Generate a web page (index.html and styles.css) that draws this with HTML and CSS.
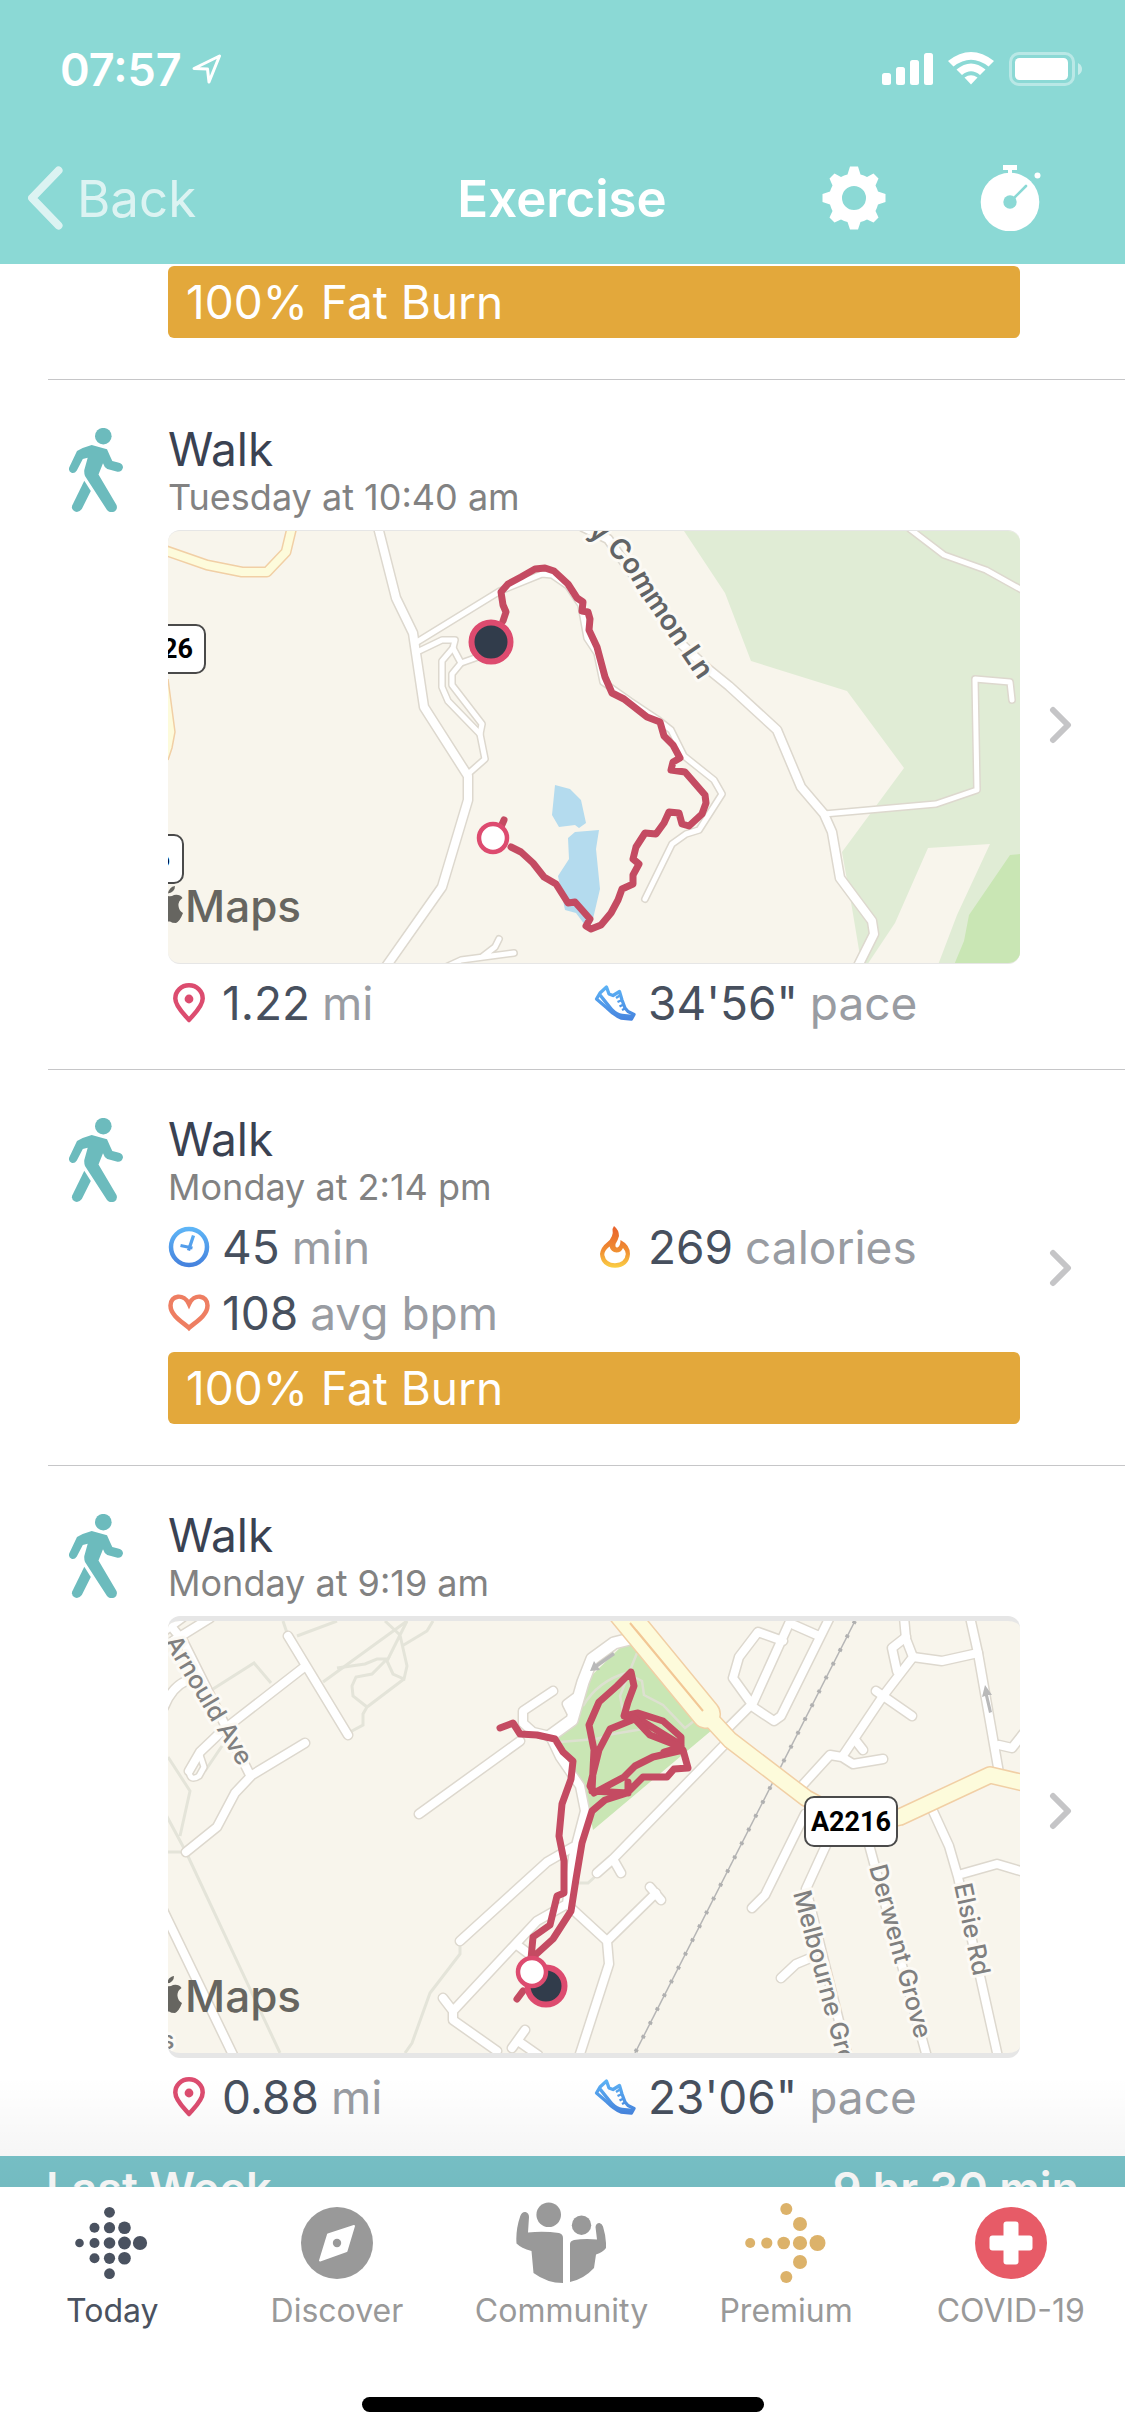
FILE: index.html
```html
<!DOCTYPE html>
<html lang="en">
<head>
    <meta charset="UTF-8">
    <meta name="viewport" content="width=device-width, initial-scale=1.0">
    <title>Exercise</title>
    <link rel="stylesheet" href="styles.css">
</head>
<body>
    <!-- shared icons and road networks -->
    <svg class="defs" width="0" height="0" aria-hidden="true">
        <defs>
            <linearGradient id="blue" x1="0" y1="0" x2="0" y2="42" gradientUnits="userSpaceOnUse">
                <stop offset="0" stop-color="#5fb8f8"/>
                <stop offset="1" stop-color="#447fdc"/>
            </linearGradient>
            <linearGradient id="fire" x1="0" y1="0" x2="0" y2="42" gradientUnits="userSpaceOnUse">
                <stop offset="0" stop-color="#e8602c"/>
                <stop offset=".6" stop-color="#f08f33"/>
                <stop offset="1" stop-color="#fbd145"/>
            </linearGradient>
            <g id="roads-a">
                <path class="lane" d="M249 111 L332 60 L374 43 L384 44 L400 55 L413 74 L419 107 L429 122 L435 151 L462 170 L489 188 L503 199 L516 225 L546 249 L554 263 L531 299 L518 303 L504 313 L477 368"/>
                <path class="lane" d="M249 121 L274 109 H287 L285 117 L293 132 L310 126"/>
                <path class="lane" d="M285 117 L274 130 V156 L280 170 L312 203"/>
                <path class="lane" d="M293 132 L284 143 V154 L314 193 L312 203 L317 228 L300 243"/>
                <path class="lane" d="M278 436 L293 429 L346 422 M314 426 L327 416 L331 408"/>
                <path class="lane" d="M742 -2 L776 24 L818 39 L854 59"/>
                <path class="lane" d="M656 283 L768 273 L809 259 L807 148 L842 151 L844 169"/>
                <path class="road" d="M210 -4 L228 67 L245 102 L256 176 L300 245 V269 L274 356 L217 437"/>
                <path class="road" d="M415 -4 L440 8 L476 59 L509 109 L540 138 L561 155 L609 199 L633 256 L656 283 L664 301 L672 347 L704 390 L706 403 L689 437"/>
            </g>
            <g id="roads-b">
                <path class="road" d="M-4 10 L15 -4 M5 20 L42 -3 M-4 86 Q4 66 18 60 M-6 -6 L15 20 L82 154"/>
                <path class="road" d="M21 150 L32 131 L54 110 L135 47 M120 15 L180 114 M18 231 L49 206 L67 172 L84 154 L137 122"/>
                <path class="lane" d="M21 150 Q22 161 31 155 L36 146 L32 134"/>
                <path class="road" d="M-6 287 L66 436"/>
                <path class="road" d="M251 193 L352 120 M385 70 L355 90 V102 L365 111 L382 115"/>
                <path class="street-wide" d="M382 115 L404 99 L415 61 L424 38 L446 22 L462 18"/>
                <path class="road" d="M404 93 L399 83 L407 77"/>
                <path class="road" d="M382 115 L392 136 L412 165 L417 190 L405 236 L399 283 L369 300 L285 390 V399 L329 430 M275 377 L285 390 M349 324 L365 336"/>
                <path class="road" d="M405 226 L379 241 L292 320"/>
                <path class="road" d="M402 286 L439 320 L488 272 M482 266 L493 279 M439 320 L441 343 L411 436"/>
                <path class="road" d="M357 409 L344 427 M350 420 L370 434"/>
                <path class="road" d="M429 252 L445 238 L562 118 M445 238 L453 252"/>
                <path class="road" d="M558 109 L585 82 L624 -4 M583 82 L565 57 L571 36 L590 11 L615 20 M585 86 L606 100 L613 95 L662 -4 M626 4 L651 15"/>
                <path class="road" d="M736 -4 L738 18 L745 36 L715 75 L674 136 L685 143 L715 138 M674 136 L662 134 L631 168"/>
                <path class="road" d="M738 16 L724 27 L729 50 M745 36 L774 40 L810 32 M708 70 L744 95 M688 120 L695 129"/>
                <path class="road" d="M802 -4 L810 32 L831 152 M831 124 L844 127 L855 113"/>
                <path class="road" d="M637 193 L597 274 L584 287 M660 220 L638 268 L680 436 M700 220 L759 436"/>
                <path class="road" d="M764 188 L781 225 L790 256 L830 436 M790 254 L829 243 L856 251 M613 357 L628 343 L640 338"/>
            </g>
        </defs>
        <symbol id="walker" viewBox="0 0 54 84">
            <circle cx="34.3" cy="8.2" r="8.3"/>
            <path d="M8 23 Q15 19 22.7 17 L38 21.2 Q41 28 43.3 33 L50 34.7 Q54 36 54 39.5 Q53 44 48.5 43.7 L38.3 41 Q35 39 34 35.3 L29.5 46.5 L47.5 77 Q49 81 45.5 83.5 Q41 85.5 38 82 L16 48 Q15 45 15.3 42 L18.7 29.8 L13.8 31 L7.8 42.5 Q5.5 46 2.5 44.8 Q-0.8 43.5 0.2 39.5 Z"/>
            <path d="M15.3 52.7 L21.8 63 L12.8 81 Q10 84.8 6 83.6 Q2 81.5 3.2 77.5 Z"/>
        </symbol>
        <symbol id="pin" viewBox="0 0 42 42">
            <path d="M21 38 C18 34 7.3 25 7.3 16.5 A13.7 13.2 0 0 1 34.7 16.5 C34.7 25 24 34 21 38 Z" fill="none" stroke="#dc4c6f" stroke-width="4.5" stroke-linejoin="round"/>
            <circle cx="21" cy="17" r="4.4" fill="#dc4c6f"/>
        </symbol>
        <symbol id="shoe" viewBox="0 0 42 42">
            <g fill="none" stroke="url(#blue)" stroke-linejoin="round">
                <path d="M2.5 17 L6 11 L12.5 5 L15 12 L19 13.5 L25.5 9.5 L28 18 L31 26 L34 29.5 L40 32.5 L37.5 37 L27 36 Q20 33 13 26 Z" stroke-width="3.3"/>
                <path d="M6 13 L18 28 Q23 33 28 33.5 L38 34.5" stroke-width="3.5"/>
                <path d="M22 16 L26.5 13 M23.5 20 L28 18 M25.5 24.5 L29.5 22.5 M28 28 L31 26.5" stroke-width="2.4"/>
            </g>
        </symbol>
        <symbol id="next" viewBox="0 0 24 38">
            <path d="M4 4 L19 19 L4 34" fill="none" stroke="#c5c5c7" stroke-width="6" stroke-linecap="round" stroke-linejoin="round"/>
        </symbol>
        <symbol id="apple" viewBox="0 0 16 38">
            <path d="M0 10 Q3 11 6 9 Q12 8 14.5 12 Q10 15 10.5 20 Q11 25 15 27 Q12 35 8 37 Q4 37 2 35.5 L0 35.5 Z"/>
            <path d="M0 7.5 Q1 1 7 0 Q7 6 0 7.5 Z"/>
        </symbol>
    </svg>

    <header class="header">
        <div class="status">
            <span class="time">07:57</span>
            <svg class="location" viewBox="0 0 30 30"><path d="M2 14.5 L27.5 2 L17 28 L15.5 15 Z" fill="none" stroke="#fff" stroke-width="3" stroke-linejoin="round"/></svg>
            <svg class="signal" viewBox="0 0 202 36" fill="#fff">
                <rect x="1" y="22" width="9" height="12" rx="2.5"/>
                <rect x="15" y="16" width="9" height="18" rx="2.5"/>
                <rect x="29" y="9" width="9" height="25" rx="2.5"/>
                <rect x="43" y="2" width="9" height="32" rx="2.5"/>
                <path d="M67 10 Q90 -8 113 10 L107.5 15.5 Q90 2 72.5 15.5 Z"/>
                <path d="M75.5 18.5 Q90 6.5 104.5 18.5 L99 24 Q90 16.5 81 24 Z"/>
                <path d="M83.5 26.5 Q90 22 96.5 26.5 L90 33.5 Z"/>
                <rect x="129.5" y="2.5" width="63" height="31" rx="8.5" fill="none" stroke="#fff" stroke-width="3" opacity=".4"/>
                <rect x="134" y="7" width="53" height="22" rx="4.5"/>
                <path d="M197 12 Q201 14 201 18 Q201 22 197 24 Z" opacity=".5"/>
            </svg>
        </div>
        <nav class="navbar">
            <a class="back" href="#">
                <svg class="back-icon" viewBox="0 0 36 64"><path d="M31.5 4.5 L5 32 L31.5 59.5" fill="none" stroke="#fff" stroke-width="8" stroke-linecap="round" stroke-linejoin="round"/></svg>
                Back
            </a>
            <h1 class="title">Exercise</h1>
            <div class="actions">
                <button class="action" type="button" aria-label="Settings">
                    <svg viewBox="0 0 66 66">
                        <path fill="#fff" fill-rule="evenodd" d="M29 1.5 H37 L39.5 9.5 Q43 10.2 46 12 L52.5 8.5 L57.5 13.5 L54.5 20.5 Q56 23.5 57 26.5 L64.5 29 V37 L57 39.5 Q56 43 54.5 46 L57.5 52.5 L52.5 57.5 L46 54.5 Q43 56 39.5 57 L37 64.5 H29 L26.5 57 Q23 56 20 54.5 L13.5 57.5 L8.5 52.5 L11.5 46 Q10 43 9 39.5 L1.5 37 V29 L9 26.5 Q10 23.5 11.5 20.5 L8.5 13.5 L13.5 8.5 L20 12 Q23 10.2 26.5 9.5 Z M33 21 A12 12 0 1 0 33 45 A12 12 0 1 0 33 21 Z"/>
                    </svg>
                </button>
                <button class="action" type="button" aria-label="Start timer">
                    <svg viewBox="0 0 66 66">
                        <circle cx="33" cy="37" r="29.3" fill="#fff"/>
                        <path d="M26 0 H40 V5 H35 V10 H31 V5 H26 Z" fill="#fff"/>
                        <circle cx="60.5" cy="10.5" r="3" fill="#fff"/>
                        <circle cx="33" cy="37" r="6.7" fill="#8bd9d5"/>
                        <path d="M36 34 L49 21" stroke="#8bd9d5" stroke-width="2.6" stroke-linecap="round"/>
                    </svg>
                </button>
            </div>
        </nav>
    </header>

    <main class="feed">
        <article class="entry entry-cut">
            <div class="details">
                <div class="zone">100% Fat Burn</div>
            </div>
        </article>

        <article class="entry entry-map">
            <svg class="walker"><use href="#walker"/></svg>
            <div class="details">
                <h2 class="name">Walk</h2>
                <p class="date">Tuesday at 10:40 am</p>
                <div class="map map-thin">
                    <svg viewBox="0 0 852 432" preserveAspectRatio="xMidYMid slice">
                        <path class="park-light" d="M516 0 L557 62 L583 130 L679 160 L736 237 L674 321 L684 377 L691 419 L695 434 H852 V0 Z"/>
                        <path class="land" d="M760 317 L822 313 L789 384 L770 434 H699 L727 392 Z"/>
                        <path class="park" d="M852 323 L842 324 L801 384 L796 410 L786 434 H852 Z"/>
                        <path class="water" d="M387 254 L402 258 L413 269 L418 292 L411 297 L407 294 L391 296 L384 284 Z"/>
                        <path class="water" d="M407 301 L431 299 L428 318 L432 358 L424 392 L417 394 L408 382 L397 379 L390 345 L401 328 L400 307 Z"/>

                        <use href="#roads-a" class="road-edge"/>
                        <use href="#roads-a" class="road-fill"/>
                        <path class="main-edge w11" d="M-4 19 L39 34 L74 41 H99 L118 21 L124 -4"/>
                        <path class="main-fill w11" d="M-4 19 L39 34 L74 41 H99 L118 21 L124 -4"/>
                        <path d="M0 148 L7 201 L4 217 L0 229" fill="#fdfbdb" stroke="#f1cfa5" stroke-width="1.5"/>

                        <path id="common-ln" d="M419 3 Q451 24 470 60 L540 163" fill="none"/>
                        <text class="street street-bold"><textPath href="#common-ln">y Common Ln</textPath></text>

                        <rect class="shield" x="-60" y="94" width="97" height="48" rx="9"/>
                        <text class="shield-text" x="25" y="127" text-anchor="end">26</text>
                        <rect class="shield" x="-60" y="304" width="75" height="48" rx="9"/>
                        <text class="shield-text" x="2" y="337" text-anchor="end">6</text>

                        <path class="route" d="M335 90 L338 81 L335 74 L333 61 L340 53 L353 46 L367 38 L377 37 L386 40 L400 53 L409 67 L415 71 L414 80 L420 81 L422 88 L421 99 L429 116 L437 146 L444 162 L456 168 L479 186 L492 191 L496 205 L505 214 L512 227 L505 231 L503 239 L517 241 L524 249 L537 264 L538 272 L534 283 L521 295 L514 293 L511 282 L501 281 L496 292 L488 303 L477 302 L468 316 L465 328 L471 333 L465 344 L465 353 L454 358 L450 369 L443 382 L433 394 L423 398 L418 395 L422 388 L407 371 L400 372 L388 353 L376 346 L365 332 L353 321 L343 316"/>
                        <path class="route" d="M336 289 L332 298"/>
                        <circle cx="323" cy="111" r="19.500" fill="#313c4b" stroke="#dd4b6f" stroke-width="6"/>
                        <circle cx="325" cy="307" r="14" fill="#fff" stroke="#dd4b6f" stroke-width="4.500"/>

                        <use class="brand" href="#apple" x="0" y="355" width="16" height="38"/>
                        <text class="brand" x="17" y="391">Maps</text>
                    </svg>
                </div>
                <ul class="stats">
                    <li class="stat"><svg class="icon"><use href="#pin"/></svg><b>1.22</b> mi</li>
                    <li class="stat"><svg class="icon"><use href="#shoe"/></svg><b>34'56"</b> pace</li>
                </ul>
            </div>
            <a class="next" href="#" aria-label="Open Tuesday walk"><svg><use href="#next"/></svg></a>
        </article>

        <article class="entry">
            <svg class="walker"><use href="#walker"/></svg>
            <div class="details">
                <h2 class="name">Walk</h2>
                <p class="date">Monday at 2:14 pm</p>
                <ul class="stats">
                    <li class="stat">
                        <svg class="icon" viewBox="0 0 42 42" fill="none" stroke="url(#blue)"><circle cx="21" cy="21" r="18" stroke-width="4.5"/><path d="M25.5 9.5 L20.5 24.5 M12.5 19.5 L24.5 22" stroke-width="3.3"/></svg>
                        <b>45</b> min
                    </li>
                    <li class="stat">
                        <svg class="icon" viewBox="0 0 42 42"><path fill="url(#fire)" fill-rule="evenodd" d="M20 0 Q25 4 25 10 Q24 14 21.5 18 Q21 22 23.5 21.5 Q26.5 20 26.5 14 Q36 19 36 28 Q35 41 21 41.8 Q7 41 6 28 Q7 21 13 16.5 Q20 11 18.5 3 Z M15.5 20.5 Q10 25 10.3 29 Q12 37 21 37.3 Q31 36.5 31.8 28 Q31.5 24.5 29 22 Q27 26.5 22.5 26.5 Q17 26 15.5 20.5 Z"/></svg>
                        <b>269</b> calories
                    </li>
                    <li class="stat">
                        <svg class="icon" viewBox="0 0 42 42"><path d="M21 36 C16 31 2.5 24 2.5 13.5 C2.5 3 16 1 21 12 C26 1 39.5 3 39.5 13.5 C39.5 24 26 31 21 36 Z" fill="none" stroke="#ee7e62" stroke-width="4.5"/></svg>
                        <b>108</b> avg bpm
                    </li>
                </ul>
                <div class="zone">100% Fat Burn</div>
            </div>
            <a class="next" href="#" aria-label="Open Monday afternoon walk"><svg><use href="#next"/></svg></a>
        </article>

        <article class="entry entry-map entry-last">
            <svg class="walker"><use href="#walker"/></svg>
            <div class="details">
                <h2 class="name">Walk</h2>
                <p class="date">Monday at 9:19 am</p>
                <div class="map">
                    <svg viewBox="0 0 852 432" preserveAspectRatio="xMidYMid slice">
                        <path class="park" d="M459 20 L544 109 L425 209 L419 179 L412 161 L387 115 L407 97 L419 59 Z"/>
                        <path d="M392 121 L428 118 L445 113 L481 107 M469 32 L461 52 L452 75 L456 95 M415 85 Q430 60 458 52 L474 60 L476 74 L495 84 L517 107 L526 100" fill="none" stroke="#dde0d0" stroke-width="2.5"/>
                        <g class="footpath">
                            <path d="M0 136 L22 170 L12 215 M54 125 L37 150 M-4 190 L18 231 L112 432 M0 231 H18"/>
                            <path d="M45 68 L86 42 L103 62 M115 0 L120 15 M129 15 L169 0 M155 61 L239 0"/>
                            <path d="M217 0 L232 14 L219 40 L225 53 L236 58 L239 45 L232 14 M234 25 L259 10 L265 0 M239 0 L232 14"/>
                            <path d="M169 47 L197 43 L209 38 H219 L204 53 L188 56 L184 65 L185 75 L199 86 L236 58 M199 86 L195 93 V104 L182 111"/>
                            <path d="M292 322 V333 L262 372 L244 422 L237 432 M410 262 H420 L430 253"/>
                        </g>
                        <use href="#roads-b" class="road-edge"/>
                        <use href="#roads-b" class="road-fill"/>

                        <path d="M687 0 L467 432" stroke="#b5b5b5" stroke-width="1.5"/>
                        <path d="M687 0 L467 432" stroke="#b0b0b0" stroke-width="4" stroke-dasharray="3 12.5"/>

                        <g class="main-edge">
                            <path class="w30" d="M455 -8 L538 93"/>
                            <path class="w18" d="M538 93 L562 119 L638 177 L690 205 L732 196 L822 154 L856 162"/>
                        </g>
                        <g class="main-fill">
                            <path class="w30" d="M455 -8 L538 93"/>
                            <path class="w18" d="M538 93 L562 119 L638 177 L690 205 L732 196 L822 154 L856 162"/>
                        </g>
                        <path d="M462 2 L535 90 L468 9" fill="none" stroke="#f2c795" stroke-width="2"/>

                        <g fill="#b9b9b9">
                            <path d="M445 31 L447 34 L430 46 L432 49 L422 50 L426 40 L428 43 Z"/>
                            <path d="M821 92 L824 91 L820 74 L824 74 L817 64 L814 76 L817 75 Z"/>
                        </g>

                        <text class="street" transform="translate(-4 21) rotate(59)">Arnould Ave</text>
                        <text class="street" transform="translate(625 272) rotate(75)">Melbourne Gro</text>
                        <text class="street" transform="translate(701 246) rotate(75)">Derwent Grove</text>
                        <text class="street" transform="translate(786 264) rotate(78)">Elsie Rd</text>
                        <text class="street" x="-7" y="428">s</text>

                        <rect class="shield" x="637" y="176" width="92" height="49" rx="9"/>
                        <text class="shield-text" x="683" y="210" text-anchor="middle">A2216</text>

                        <path class="route" d="M332 107 L345 102 L352 113 L369 114 L387 118 L395 131 L405 140 L403 158 L394 183 L391 215 L396 240 V272 L389 275 L382 304 L365 316 L363 338 L385 318 L403 290 L408 258 L414 222 L424 190 L437 179 L459 172 L475 156 L499 156 L506 148 L520 147 L515 129 L485 136 L467 145 L456 156 L426 172 L422 165 L431 129 L442 108 L469 97 L513 124 V116 L495 100 L470 92 L456 95 L460 81 L466 65 L463 51 L449 65 L431 81 L421 104 L426 129 L424 170 L460 172 V161"/>
                        <path class="route" d="M466 97 L482 114 L513 126 L496 131"/>
                        <path class="route" d="M349 378 L355 370"/>
                        <circle cx="378" cy="365" r="18.500" fill="#313c4b" stroke="#dd4b6f" stroke-width="6"/>
                        <circle cx="364" cy="351" r="14" fill="#fff" stroke="#dd4b6f" stroke-width="4.500"/>

                        <use class="brand" href="#apple" x="-1" y="355" width="16" height="38"/>
                        <text class="brand" x="17" y="391">Maps</text>
                    </svg>
                </div>
                <ul class="stats">
                    <li class="stat"><svg class="icon"><use href="#pin"/></svg><b>0.88</b> mi</li>
                    <li class="stat"><svg class="icon"><use href="#shoe"/></svg><b>23'06"</b> pace</li>
                </ul>
            </div>
            <a class="next" href="#" aria-label="Open Monday morning walk"><svg><use href="#next"/></svg></a>
        </article>

        <div class="week">
            <span>Last Week</span>
            <span>9 hr 30 min</span>
        </div>
    </main>

    <footer class="footer">
        <nav class="tabs">
            <a class="tab active" href="#">
                <svg viewBox="0 0 82 82" fill="#4a5260">
                    <circle cx="8.5" cy="41" r="4.3"/>
                    <circle cx="23.5" cy="25.7" r="5"/><circle cx="23.5" cy="41" r="5"/><circle cx="23.5" cy="56.3" r="5"/>
                    <circle cx="38.5" cy="10.3" r="5.4"/><circle cx="38.5" cy="25.7" r="5.6"/><circle cx="38.5" cy="41" r="5.8"/><circle cx="38.5" cy="56.3" r="5.6"/><circle cx="38.5" cy="71.7" r="5.4"/>
                    <circle cx="53.5" cy="25.7" r="6.3"/><circle cx="53.5" cy="41" r="6.4"/><circle cx="53.5" cy="56.3" r="6.3"/>
                    <circle cx="69" cy="41" r="7.1"/>
                </svg>
                Today
            </a>
            <a class="tab" href="#">
                <svg viewBox="0 0 82 82">
                    <circle cx="41" cy="41" r="36" fill="#999"/>
                    <path d="M58 24 L50.5 49 L24 58.5 L32 32.5 Z" fill="#fff" stroke="#fff" stroke-width="2" stroke-linejoin="round"/>
                    <circle cx="41" cy="41" r="4.2" fill="#999"/>
                </svg>
                Discover
            </a>
            <a class="tab" href="#">
                <svg viewBox="0 0 90 82" fill="#999">
                    <circle cx="32.7" cy="12.7" r="12.3"/>
                    <circle cx="65.5" cy="23.2" r="9.7"/>
                    <path d="M4.3 14 Q6 9.5 9.5 10 Q13 11 13 15 L12 30.5 Q28 29 43 31 Q47 32 47 36 V81 Q31 81 17.5 71 L15.5 49 Q5 46 0.5 41.5 Q-0.5 28 4.3 14 Z"/>
                    <path d="M54 42 Q54 39 58 38 Q68 36.5 81 37.5 L79.5 25 Q80 21 83.5 21 Q86 21.5 87 24.5 Q90.5 36 90 46 Q87 50 80 52.5 L78 66 Q68 77 54 80 Z"/>
                </svg>
                Community
            </a>
            <a class="tab" href="#">
                <svg viewBox="0 0 82 82" fill="#dcb26a">
                    <circle cx="5.2" cy="41" r="5"/><circle cx="21.8" cy="41" r="5.6"/><circle cx="38.7" cy="41" r="6.3"/><circle cx="55" cy="41" r="7.1"/><circle cx="72.5" cy="41" r="8"/>
                    <circle cx="41.3" cy="7" r="6"/><circle cx="55" cy="22" r="7"/><circle cx="55" cy="60" r="7"/><circle cx="41.3" cy="75" r="6"/>
                </svg>
                Premium
            </a>
            <a class="tab" href="#">
                <svg viewBox="0 0 82 82">
                    <circle cx="41" cy="41" r="36" fill="#e75b67"/>
                    <rect x="19.5" y="33.5" width="43" height="15" rx="3" fill="#fff"/>
                    <rect x="33.5" y="19.5" width="15" height="43" rx="3" fill="#fff"/>
                </svg>
                COVID-19
            </a>
        </nav>
        <div class="home"></div>
    </footer>
</body>
</html>
```
FILE: styles.css
```css
* {
    box-sizing: border-box;
}

body {
    display: flex;
    flex-direction: column;
    height: 100vh;
    margin: 0;
    background: #fff;
    color: #3a4252;
    font-family: Inter, "Liberation Sans", sans-serif;
    font-size: 46px;
}

h1, h2, p, ul {
    margin: 0;
    padding: 0;
    font-weight: 400;
}

a {
    color: inherit;
    text-decoration: none;
}

svg {
    display: block;
}

.defs {
    position: absolute;
}

/* header */
.header {
    flex: none;
    background: #8bd9d5;
    color: #fff;
}

.status {
    display: flex;
    align-items: center;
    height: 132px;
    padding: 6px 42px 0 60px;
}

.time {
    font-size: 45px;
    font-weight: 600;
}

.location {
    width: 30px;
    height: 30px;
    margin-left: 10px;
}

.signal {
    width: 202px;
    height: 36px;
    margin-left: auto;
}

.navbar {
    display: grid;
    grid-template-columns: 1fr auto 1fr;
    align-items: center;
    height: 132px;
    padding: 0 82px 0 27px;
    font-size: 51px;
}

.back {
    display: flex;
    align-items: center;
    gap: 14px;
    opacity: .7;
}

.back-icon {
    width: 36px;
    height: 64px;
}

.title {
    padding-left: 54px;
    font-size: 51px;
    font-weight: 600;
}

.actions {
    display: flex;
    justify-content: flex-end;
    gap: 90px;
}

.action {
    width: 66px;
    height: 66px;
    padding: 0;
    border: none;
    background: none;
}

/* exercise list */
.feed {
    position: relative;
    flex: 1;
    min-height: 0;
    overflow: hidden;
}

.feed::after {
    content: "";
    position: absolute;
    right: 0;
    bottom: 0;
    left: 0;
    height: 110px;
    background: linear-gradient(rgba(0, 0, 0, 0), rgba(0, 0, 0, .05));
}

.entry {
    display: flex;
    margin-left: 48px;
    padding: 0 52px 0 21px;
    border-bottom: 1px solid #c6c6c8;
}

.entry-cut {
    padding-left: 120px;
    padding-right: 105px;
}

.entry-map {
    min-height: 690px;
}

.entry-last {
    border-bottom: none;
}

.walker {
    width: 54px;
    height: 84px;
    margin: 48px 45px 0 0;
    fill: #6cbbbd;
}

.details {
    flex: 1;
    min-width: 0;
    padding: 41px 0;
}

.entry-cut .details {
    padding-top: 2px;
}

.entry-map .details {
    padding-bottom: 24px;
}

.name {
    font-size: 46px;
    line-height: 56px;
}

.date {
    padding-bottom: 7px;
    color: #828282;
    font-size: 36px;
    line-height: 40px;
}

.stats {
    display: grid;
    grid-template-columns: 1fr 1fr;
    list-style: none;
}

.stat {
    display: flex;
    align-items: center;
    gap: 12px;
    height: 66px;
    color: #999ca2;
    white-space: nowrap;
}

.stat b {
    color: #47505e;
    font-weight: 400;
}

.icon {
    width: 42px;
    height: 42px;
}

.zone {
    height: 72px;
    margin-top: 6px;
    padding-left: 18px;
    border-radius: 6px;
    background: #e3a83b;
    color: #fff;
    line-height: 72px;
}

.entry-cut .zone {
    margin-top: 0;
}

.next {
    align-self: center;
    margin-left: 29px;
}

.next svg {
    width: 24px;
    height: 38px;
}

/* maps */
.map {
    margin: 6px 0;
    border: solid #e6e6e6;
    border-width: 5px 0;
    border-radius: 12px;
    overflow: hidden;
    background: #f8f5ec;
}

.map-thin {
    border-width: 1px 0;
}

.map svg {
    width: 100%;
}

.land {
    fill: #f8f5ec;
}

.park-light {
    fill: #e0ecd5;
}

.park {
    fill: #c9e6b4;
}

.water {
    fill: #b4dbee;
}

/* each road is drawn twice, the casing a little wider than the fill */
.road-edge, .road-fill, .main-edge, .main-fill {
    fill: none;
    stroke-linecap: round;
    stroke-linejoin: round;
}

.road-edge {
    --casing: 3px;
    stroke: #ddd8ce;
}

.road-fill {
    --casing: 0px;
    stroke: #fff;
}

.main-edge {
    --casing: 3px;
    stroke: #f1cfa5;
}

.main-fill {
    --casing: 0px;
    stroke: #fdfbdb;
}

.lane { stroke-width: calc(5px + var(--casing)); }
.road { stroke-width: calc(8px + var(--casing)); }
.street-wide { stroke-width: calc(11px + var(--casing)); }
.w11 { stroke-width: calc(8px + var(--casing)); }
.w18 { stroke-width: calc(15px + var(--casing)); }
.w30 { stroke-width: calc(27px + var(--casing)); }

.footpath {
    fill: none;
    stroke: #e4e4d9;
    stroke-width: 3;
}

.route {
    fill: none;
    stroke: #c44b62;
    stroke-width: 7;
    stroke-linecap: round;
    stroke-linejoin: round;
}

.street {
    fill: #808080;
    stroke: #fcfaf5;
    stroke-width: 6;
    stroke-linejoin: round;
    paint-order: stroke;
    font-size: 25px;
    font-weight: 500;
}

.street-bold {
    fill: #626466;
    font-size: 28px;
    font-weight: 600;
}

.shield {
    fill: #fff;
    stroke: #4a4a4a;
    stroke-width: 2;
}

.shield-text {
    fill: #000;
    font-family: Roboto, sans-serif;
    font-size: 27px;
    font-weight: 700;
}

.brand {
    fill: #666560;
    font-size: 44px;
    font-weight: 500;
}

/* next section */
.week {
    display: flex;
    justify-content: space-between;
    height: 90px;
    padding: 5px 46px 0;
    background: #7ac5cb;
    color: #fff;
    font-size: 45px;
    font-weight: 600;
    line-height: 56px;
}

/* tab bar */
.footer {
    flex: none;
    padding-bottom: 24px;
    background: #fff;
}

.tabs {
    display: grid;
    grid-template-columns: repeat(5, 1fr);
    height: 210px;
    padding: 15px 2px 0 0;
    color: #999;
    font-size: 32px;
    line-height: 40px;
}

.tab {
    display: flex;
    flex-direction: column;
    align-items: center;
    gap: 7px;
}

.tab svg {
    height: 82px;
}

.active {
    color: #4a5260;
}

.home {
    width: 402px;
    height: 15px;
    margin: 0 auto;
    border-radius: 8px;
    background: #000;
}
```
